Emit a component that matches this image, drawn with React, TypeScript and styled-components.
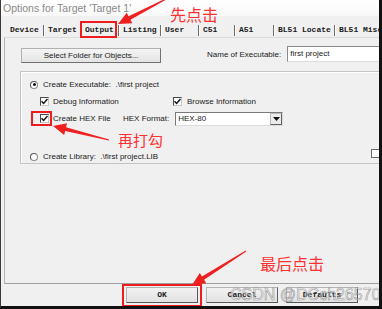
import styled, { createGlobalStyle } from 'styled-components';

const GlobalStyle = createGlobalStyle`
  html, body {
    margin: 0;
    padding: 0;
    background: #f0f0f0;
    overflow: hidden;
  }
`

type Pt = [number, number]

// tapered arrow: thin tail, fat head
function arrowPoints(tail: Pt, tip: Pt) {
    const dx = tip[0] - tail[0]
    const dy = tip[1] - tail[1]
    const len = Math.hypot(dx, dy)
    const ux = dx / len
    const uy = dy / len
    const nx = -uy
    const ny = ux
    const headLen = 13
    const headW = 6
    const bx = tip[0] - ux * headLen
    const by = tip[1] - uy * headLen
    const pts: Pt[] = [
        [tail[0] + nx * 0.5, tail[1] + ny * 0.5],
        [bx + nx * 2, by + ny * 2],
        [bx + nx * headW, by + ny * headW],
        tip,
        [bx - nx * headW, by - ny * headW],
        [bx - nx * 2, by - ny * 2],
        [tail[0] - nx * 0.5, tail[1] - ny * 0.5],
    ]
    return pts.map(p => p.join(',')).join(' ')
}

const tabs = [
    { label: 'Device', width: 37 },
    { label: 'Target', width: 37 },
    { label: 'Output', width: 38 },
    { label: 'Listing', width: 42 },
    { label: 'User', width: 38 },
    { label: 'C51', width: 36 },
    { label: 'A51', width: 39 },
    { label: 'BL51 Locate', width: 61 },
    { label: 'BL51 Misc', width: 60 },
]

function Check() {
    return (
        <CheckBox>
            <svg width="7" height="7" viewBox="0 0 7 7">
                <path d="M0.5 3.2 L2.6 5.4 L6.5 1" fill="none" stroke="#111" strokeWidth="1.5" />
            </svg>
        </CheckBox>
    )
}

function App() {
    return (
        <>
            <GlobalStyle />
            <Window>
                <TitleBar>Options for Target 'Target 1'</TitleBar>
                <TabStrip>
                    {tabs.map((t, i) => (
                        <Tab key={t.label} $width={t.width} $first={i === 0}>{t.label}</Tab>
                    ))}
                </TabStrip>
                <TabPanel>
                    <TopRow>
                        <FolderButton>Select Folder for Objects...</FolderButton>
                        <Label $ml={46}>Name of Executable:</Label>
                        <TextInput>first project</TextInput>
                    </TopRow>
                    <GroupBox>
                        <OptionRow $h={17} $mt={4}>
                            <Radio $on />
                            <Label $ml={5}>Create Executable:&nbsp; .\first project</Label>
                        </OptionRow>
                        <OptionRow $h={17}>
                            <CheckItem $width={133}>
                                <Check />
                                <Label $ml={4}>Debug Information</Label>
                            </CheckItem>
                            <CheckItem>
                                <Check />
                                <Label $ml={5}>Browse Information</Label>
                            </CheckItem>
                        </OptionRow>
                        <OptionRow $h={17}>
                            <CheckItem $width={83}>
                                <Check />
                                <Label $ml={4}>Create HEX File</Label>
                            </CheckItem>
                            <Label>HEX Format:</Label>
                            <Select>
                                HEX-80
                                <DropButton>
                                    <svg width="7" height="4" viewBox="0 0 7 4">
                                        <path d="M0 0 H7 L3.5 4 Z" fill="#111" />
                                    </svg>
                                </DropButton>
                            </Select>
                        </OptionRow>
                        <OptionRow $h={13} $mt={23}>
                            <Radio />
                            <Label $ml={5}>Create Library:&nbsp; .\first project.LIB</Label>
                            <EmptyBox />
                        </OptionRow>
                    </GroupBox>
                </TabPanel>
                <ButtonRow>
                    <DialogButton>OK</DialogButton>
                    <DialogButton>Cancel</DialogButton>
                    <DialogButton>Defaults</DialogButton>
                </ButtonRow>

                <RedBox $x={80} $y={21} $w={37} $h={17} />
                <RedBox $x={31} $y={111} $w={21} $h={15} />
                <RedBox $x={122} $y={284} $w={80} $h={23} />

                <Arrows width="382" height="309">
                    <polygon points={arrowPoints([168, -2], [118, 24])} />
                    <polygon points={arrowPoints([109, 140], [53, 126])} />
                    <polygon points={arrowPoints([246, 251], [192, 285])} />
                </Arrows>

                <Note $x={170} $y={5} $size={16}>先点击</Note>
                <Note $x={118} $y={131} $size={15}>再打勾</Note>
                <Note $x={260} $y={254} $size={16}>最后点击</Note>

                <Watermark>CSDN @DCch26570</Watermark>
            </Window>
        </>
    );
}

export default App;

const Window = styled.div`
    position: relative;
    box-sizing: border-box;
    width: 382px;
    height: 309px;
    display: flex;
    flex-direction: column;
    background: #f0f0f0;
    border-left: 1px solid #3a3a3a;
    border-right: 3px solid #111;
    border-bottom: 3px solid #111;
    overflow: hidden;
    font-family: "Liberation Sans", Arial, sans-serif;
`

const TitleBar = styled.div`
    height: 16px;
    line-height: 16px;
    padding-left: 2px;
    font-size: 10.5px;
    color: #8a8a8a;
    background: linear-gradient(#ffffff, #f8f8f8);
    white-space: nowrap;
`

const TabStrip = styled.div`
    display: flex;
    margin-top: 6px;
    padding-left: 5px;
    height: 15px;
    white-space: nowrap;
`

const Tab = styled.div<{ $width: number; $first?: boolean }>`
    box-sizing: border-box;
    flex: none;
    width: ${p => p.$width}px;
    height: 11px;
    margin-top: 3px;
    padding-left: 4px;
    line-height: 10px;
    border-left: ${p => (p.$first ? 'none' : '1px solid #6c6c6c')};
    box-shadow: ${p => (p.$first ? 'none' : 'inset 1px 0 #ffffff')};
    font-family: "Liberation Mono", "Courier New", monospace;
    font-weight: 700;
    font-size: 8px;
    color: #1a1a1a;
    overflow: hidden;
`

const TabPanel = styled.div`
    box-sizing: border-box;
    height: 247px;
    margin-left: 3px;
    border-top: 1px solid #dadada;
    border-left: 1px solid #b4b4b4;
    border-bottom: 1px solid #a0a0a0;
    overflow: hidden;
`

const TopRow = styled.div`
    display: flex;
    align-items: flex-start;
    height: 17px;
    padding: 8px 0 0 16px;
`

const FolderButton = styled.div`
    box-sizing: border-box;
    flex: none;
    width: 140px;
    height: 15px;
    margin-top: 2px;
    line-height: 13px;
    text-align: center;
    font-size: 8px;
    color: #1a1a1a;
    background: linear-gradient(#f4f4f4, #e4e4e4);
    border: 1px solid #b0b0b0;
    border-right-color: #707070;
    border-bottom-color: #707070;
`

const Label = styled.span<{ $ml?: number }>`
    flex: none;
    margin-left: ${p => p.$ml || 0}px;
    font-size: 8px;
    color: #1a1a1a;
    white-space: nowrap;
    line-height: 17px;
`

const TextInput = styled.div`
    box-sizing: border-box;
    flex: none;
    width: 100px;
    height: 16px;
    margin-left: 6px;
    padding-left: 2px;
    line-height: 14px;
    font-size: 8px;
    color: #1a1a1a;
    background: #ffffff;
    border: 1px solid #dcdcdc;
    border-top-color: #8a8a8a;
    border-left-color: #8a8a8a;
`

const GroupBox = styled.div`
    box-sizing: border-box;
    width: 372px;
    height: 93px;
    margin: 8px 0 0 15px;
    padding-left: 9px;
    border: 1px solid #c4c4c4;
    box-shadow: inset 1px 1px #ffffff;
`

const OptionRow = styled.div<{ $h: number; $mt?: number }>`
    display: flex;
    align-items: center;
    height: ${p => p.$h}px;
    margin-top: ${p => p.$mt || 0}px;
    padding-left: ${p => (p.$h === 17 && !p.$mt ? 10 : 0)}px;
`

const CheckItem = styled.div<{ $width?: number }>`
    display: flex;
    align-items: center;
    flex: none;
    width: ${p => (p.$width ? `${p.$width}px` : 'auto')};
`

const CheckBox = styled.div`
    box-sizing: border-box;
    display: flex;
    align-items: center;
    justify-content: center;
    width: 9px;
    height: 9px;
    background: #ffffff;
    border: 1px solid #4a4a4a;
    border-right-color: #c8c8c8;
    border-bottom-color: #c8c8c8;
`

const EmptyBox = styled(CheckBox)`
    margin-left: auto;
    margin-right: 11px;
    margin-top: -6px;
    border-color: #6a6a6a;
`

const Radio = styled.div<{ $on?: boolean }>`
    box-sizing: border-box;
    flex: none;
    position: relative;
    width: 8px;
    height: 8px;
    border-radius: 50%;
    background: #ffffff;
    border: 1px solid #8a8a8a;
    border-top-color: #555;
    border-left-color: #555;

    &::after {
        content: '';
        display: ${p => (p.$on ? 'block' : 'none')};
        position: absolute;
        left: 1.5px;
        top: 1.5px;
        width: 3px;
        height: 3px;
        border-radius: 50%;
        background: #111;
    }
`

const Select = styled.div`
    box-sizing: border-box;
    display: flex;
    align-items: center;
    flex: none;
    width: 108px;
    height: 14px;
    margin-left: 6px;
    padding-left: 2px;
    font-size: 8px;
    color: #1a1a1a;
    background: #ffffff;
    border: 1px solid #dcdcdc;
    border-top-color: #7a7a7a;
    border-left-color: #7a7a7a;
`

const DropButton = styled.div`
    box-sizing: border-box;
    display: flex;
    align-items: center;
    justify-content: center;
    width: 12px;
    height: 12px;
    margin-left: auto;
    background: #ececec;
    border: 1px solid #b8b8b8;
    border-right-color: #606060;
    border-bottom-color: #606060;
`

const ButtonRow = styled.div`
    display: flex;
    gap: 8px;
    padding: 3px 0 0 125px;
`

const DialogButton = styled.div`
    box-sizing: border-box;
    width: 72px;
    height: 16px;
    line-height: 14px;
    text-align: center;
    font-family: "Liberation Mono", "Courier New", monospace;
    font-weight: 700;
    font-size: 8px;
    color: #1a1a1a;
    background: linear-gradient(#f2f2f2, #e2e2e2);
    border: 1px solid #b4b4b4;
    border-right-color: #5a5a5a;
    border-bottom-color: #5a5a5a;
`

const RedBox = styled.div<{ $x: number; $y: number; $w: number; $h: number }>`
    position: absolute;
    box-sizing: border-box;
    left: ${p => p.$x - 1}px;
    top: ${p => p.$y}px;
    width: ${p => p.$w}px;
    height: ${p => p.$h}px;
    border: 2px solid #ee1c1c;
    pointer-events: none;
`

const Arrows = styled.svg`
    position: absolute;
    left: -1px;
    top: 0;
    fill: #ee2020;
    pointer-events: none;
`

const Note = styled.div<{ $x: number; $y: number; $size: number }>`
    position: absolute;
    left: ${p => p.$x - 1}px;
    top: ${p => p.$y}px;
    font-family: "Noto Sans CJK SC", sans-serif;
    font-size: ${p => p.$size}px;
    line-height: ${p => p.$size + 2}px;
    color: #ff3030;
    white-space: nowrap;
`

const Watermark = styled.div`
    position: absolute;
    left: 229px;
    top: 285px;
    font-family: "Liberation Sans", Arial, sans-serif;
    font-size: 16px;
    line-height: 19px;
    color: rgba(255, 255, 255, 0.55);
    -webkit-text-stroke: 0.6px rgba(70, 70, 70, 0.55);
    white-space: nowrap;
`
